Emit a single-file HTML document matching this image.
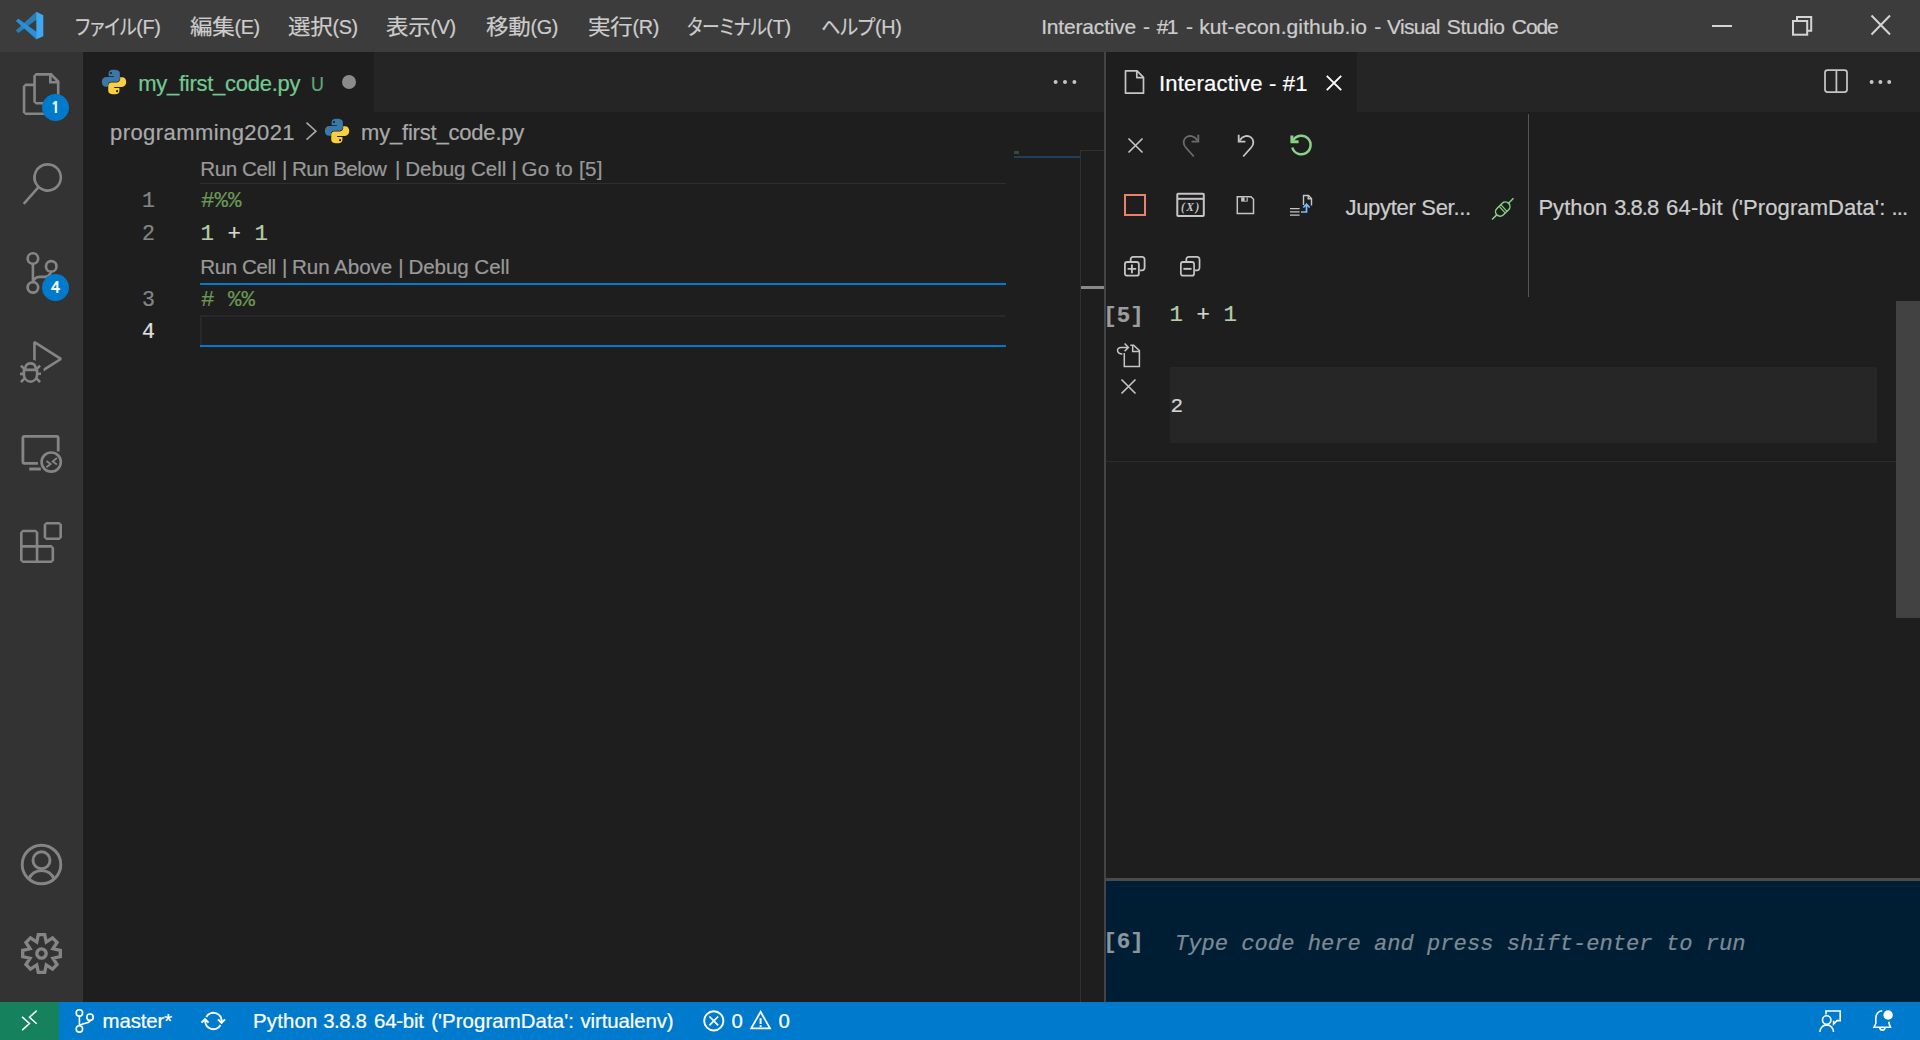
<!DOCTYPE html>
<html lang="ja">
<head>
<meta charset="utf-8">
<title>Interactive - #1 - kut-econ.github.io - Visual Studio Code</title>
<style>
*{box-sizing:border-box;margin:0;padding:0}
html,body{width:1920px;height:1040px;overflow:hidden;background:#1e1e1e}
body{position:relative;font-family:"Liberation Sans","Noto Sans CJK JP",sans-serif;color:#ccc;-webkit-font-smoothing:antialiased}
.abs{position:absolute}
.t{position:absolute;white-space:nowrap;line-height:1;-webkit-text-stroke:0.22px}
.ui{font-family:"Liberation Sans","Noto Sans CJK JP",sans-serif}
.mono{font-family:"Liberation Mono","DejaVu Sans Mono",monospace}
svg{position:absolute;overflow:visible}
/* regions */
#titlebar{left:0;top:0;width:1920px;height:52px;background:#3c3c3c}
#activity{left:0;top:52px;width:83px;height:950px;background:#333333}
#status{left:0;top:1002px;width:1920px;height:38px;background:#007acc}
#remote{left:0;top:1002px;width:59px;height:38px;background:#16825d}
#tabsL{left:83px;top:52px;width:1021px;height:60px;background:#252526}
#tabL{left:83px;top:52px;width:291px;height:60px;background:#1e1e1e}
#tabsR{left:1106px;top:52px;width:814px;height:60px;background:#252526}
#tabR{left:1106px;top:52px;width:251px;height:60px;background:#1e1e1e}
#split{left:1104px;top:52px;width:2px;height:950px;background:#444444}
.k{font-feature-settings:"palt";display:inline-block;transform-origin:0 85%}
.l{font-size:19.8px;letter-spacing:-0.3px}
.j{display:inline-block;transform:scaleY(.93);transform-origin:0 85%}
.menu{top:16px;font-size:22.5px;color:#cccccc;letter-spacing:-0.3px}

.py1{fill:#3a78aa}.py2{fill:#f8cf3f}
.tabtxt{font-size:22px}
.cl{font-size:20.6px;color:#999999;letter-spacing:-0.14px}
.code{font-family:"Liberation Mono","DejaVu Sans Mono",monospace;font-size:22.45px;white-space:pre}
.ln{font-family:"Liberation Mono","DejaVu Sans Mono",monospace;font-size:21.5px;color:#858585}
.cm{color:#6a9955}.nu{color:#b5cea8}.op{color:#d4d4d4}
.sb{top:1011px;font-size:20.400px;color:#ffffff}
.ttl{top:16px;font-size:21px;color:#cccccc}
</style>
</head>
<body>
<!-- ===== title bar ===== -->
<div id="titlebar" class="abs"></div>
<div id="activity" class="abs"></div>
<div id="tabsL" class="abs"></div>
<div id="tabL" class="abs"></div>
<div id="tabsR" class="abs"></div>
<div id="tabR" class="abs"></div>
<div id="split" class="abs"></div>
<div id="status" class="abs"></div>
<div id="remote" class="abs"></div>

<!-- menu -->
<span class="t menu" id="m1" style="left:75px"><span class="k" style="transform:scale(.8,.93);margin-right:-15.6px">ファイル</span><span class="l">(F)</span></span>
<span class="t menu" id="m2" style="left:190px"><span class="j">編集</span><span class="l">(E)</span></span>
<span class="t menu" id="m3" style="left:288px"><span class="j">選択</span><span class="l">(S)</span></span>
<span class="t menu" id="m4" style="left:386px"><span class="j">表示</span><span class="l">(V)</span></span>
<span class="t menu" id="m5" style="left:486px"><span class="j">移動</span><span class="l">(G)</span></span>
<span class="t menu" id="m6" style="left:588px"><span class="j">実行</span><span class="l">(R)</span></span>
<span class="t menu" id="m7" style="left:687px"><span class="k" style="transform:scale(.785,.93);margin-right:-22.1px">ターミナル</span><span class="l">(T)</span></span>
<span class="t menu" id="m8" style="left:821px"><span class="k" style="transform:scale(.85,.93);margin-right:-9.7px">ヘルプ</span><span class="l">(H)</span></span>
<span class="t ttl" id="tA" style="left:1041.20px;letter-spacing:-0.180px">Interactive</span>
<span class="t ttl" id="tB" style="left:1143.00px">-</span>
<span class="t ttl" id="tC" style="left:1156.80px;letter-spacing:-1.700px">#1</span>
<span class="t ttl" id="tD" style="left:1186.00px">-</span>
<span class="t ttl" id="tE" style="left:1199.20px;letter-spacing:0.112px">kut-econ.github.io</span>
<span class="t ttl" id="tF" style="left:1374.20px">-</span>
<span class="t ttl" id="tG" style="left:1387.00px;letter-spacing:-0.680px">Visual</span>
<span class="t ttl" id="tH" style="left:1446.80px;letter-spacing:-0.280px">Studio</span>
<span class="t ttl" id="tI" style="left:1511.80px;letter-spacing:-1.066px">Code</span>


<!-- VS Code logo -->
<svg id="vslogo" style="left:16px;top:12px" width="28" height="28" viewBox="0 0 100 100">
  <path d="M-0.600 65.800L8.400 74.900L74 26.500V0L72.600 -0.600Z" fill="#2c7db6"/>
  <path d="M-0.600 31.800L8.400 24.300L74 71V97L72.600 97.500Z" fill="#2990d9"/>
  <path d="M72.600 -0.600L97.500 11.400V86.200L72.600 97.500Z" fill="#40a8f3"/>
</svg>

<!-- activity bar: files -->
<svg style="left:20.500px;top:73px" width="42" height="42" viewBox="0 0 24 24" fill="#858585">
  <path d="M17.5 0h-9L7 1.5V6H2.5L1 7.500v15.070L2.500 24h12.070L16 22.570V18h4.700l1.300-1.430V4.500L17.500 0zm0 2.120l2.380 2.380H17.500V2.120zm-3 20.380h-12v-15H7v9.070L8.500 18h6v4.500zm6-6h-12v-15H16V6h4.500v10.500z"/>
</svg>
<div class="abs" style="left:42px;top:93.600px;width:27px;height:27px;border-radius:50%;background:#007acc"></div>
<span class="t" id="b1" style="font-family:'NanumGothic',sans-serif;left:42px;top:99.600px;width:27px;text-align:center;font-size:15.5px;font-weight:bold;color:#fff">1</span>
<!-- search -->
<svg style="left:21px;top:162.500px" width="42" height="42" viewBox="0 0 24 24" fill="#858585">
  <path d="M15.250 0a8.250 8.250 0 0 0-6.180 13.720L1 22.880l1.120 1 8.050-9.120A8.251 8.251 0 1 0 15.250.010V0zm0 15a6.750 6.750 0 1 1 0-13.500 6.750 6.750 0 0 1 0 13.500z"/>
</svg>
<!-- source control -->
<svg style="left:21px;top:251.500px" width="42" height="42" viewBox="0 0 24 24" fill="#858585">
  <path d="M21.007 8.222A3.738 3.738 0 0 0 15.045 5.200a3.737 3.737 0 0 0 1.156 6.583 2.988 2.988 0 0 1-2.668 1.670h-2.990a4.456 4.456 0 0 0-2.989 1.165V7.400a3.737 3.737 0 1 0-1.494 0v9.117a3.776 3.776 0 1 0 1.816.099 2.990 2.990 0 0 1 2.668-1.667h2.990a4.484 4.484 0 0 0 4.223-3.039 3.736 3.736 0 0 0 3.250-3.687zM4.565 3.738a2.242 2.242 0 1 1 4.484 0 2.242 2.242 0 0 1-4.484 0zm4.484 16.441a2.242 2.242 0 1 1-4.484 0 2.242 2.242 0 0 1 4.484 0zm8.221-9.715a2.242 2.242 0 1 1 0-4.485 2.242 2.242 0 0 1 0 4.485z"/>
</svg>
<div class="abs" style="left:42px;top:273.600px;width:27px;height:27px;border-radius:50%;background:#007acc"></div>
<span class="t" id="b4" style="font-family:'NanumGothic',sans-serif;left:42px;top:279.600px;width:27px;text-align:center;font-size:15.5px;font-weight:bold;color:#fff">4</span>
<!-- debug -->
<svg style="left:20.300px;top:340.800px" width="42" height="42" viewBox="0 0 24 24" fill="#858585">
  <path d="M10.940 13.500l-1.320 1.320a3.730 3.730 0 0 0-7.240 0L1.060 13.500 0 14.560l1.720 1.720-.22.220V18H0v1.500h1.500v.080c.077.489.214.966.410 1.420L0 22.940 1.060 24l1.650-1.650A4.308 4.308 0 0 0 6 24a4.310 4.310 0 0 0 3.290-1.650L10.940 24 12 22.940 10.090 21c.198-.464.336-.951.410-1.450v-.100H12V18h-1.500v-1.500l-.22-.220L12 14.560l-1.060-1.060zM6 13.500a2.250 2.250 0 0 1 2.250 2.250h-4.500A2.250 2.250 0 0 1 6 13.500zm3 6a3.330 3.330 0 0 1-3 3 3.330 3.330 0 0 1-3-3v-2.250h6v2.250zm14.760-9.900v1.260L13.500 17.370V15.600l8.500-5.370L9 2v9.460a5.070 5.070 0 0 0-1.500-.72V.630L8.640 0l15.120 9.600z"/>
</svg>
<!-- remote explorer -->
<svg style="left:12px;top:425px" width="60" height="55" viewBox="12 425 60 55" fill="none" stroke="#858585" stroke-width="2.800">
  <path d="M37.900 463.300H24.400A1.500 1.500 0 0 1 22.900 461.800V437.900A1.500 1.500 0 0 1 24.400 436.400H56.700A1.500 1.500 0 0 1 58.200 437.900V451.400"/>
  <path d="M29.200 469H40.800" stroke-width="3"/>
  <circle cx="51.200" cy="462.100" r="9.600" stroke-width="2.700"/>
  <path d="M46.400 460.900L50.600 464.100L46.400 467.300M56.900 458L52.700 461.400L56.900 464.600" stroke-width="1.900"/>
</svg>
<!-- extensions -->
<svg style="left:19.700px;top:521.900px" width="42" height="41" viewBox="0 0 24 24" preserveAspectRatio="none" fill="#858585">
  <path d="M13.500 1.500L15 0h7.500L24 1.500V9l-1.500 1.500H15L13.500 9V1.500zm1.500 0V9h7.500V1.500H15zM0 15V6l1.500-1.500H9L10.500 6v7.500H18l1.500 1.500v7.500L18 24H1.500L0 22.500V15zm9-1.500V6H1.500v7.500H9zM9 15H1.500v7.500H9V15zm1.500 7.500H18V15h-7.500v7.500z"/>
</svg>
<!-- account -->
<svg style="left:19.900px;top:843px" width="43" height="43" viewBox="-21.500 -21.500 43 43" fill="none" stroke="#858585" stroke-width="2.900">
  <circle cx="0" cy="0" r="19.300"/>
  <circle cx="0" cy="-4.300" r="8.500"/>
  <path d="M-12.600 14.600A13.500 13.500 0 0 1 12.600 14.600"/>
</svg>
<!-- gear -->
<svg style="left:19.700px;top:931.800px" width="43" height="43" viewBox="-21.500 -21.500 43 43" fill="none" stroke="#858585" stroke-width="3.300">
  <path d="M-3.20 -18.80 L3.20 -18.80 L4.75 -11.46 L11.03 -15.56 L15.56 -11.03 L11.46 -4.75 L18.80 -3.20 L18.80 3.20 L11.46 4.75 L15.56 11.03 L11.03 15.56 L4.75 11.46 L3.20 18.80 L-3.20 18.80 L-4.75 11.46 L-11.03 15.56 L-15.56 11.03 L-11.46 4.75 L-18.80 3.20 L-18.80 -3.20 L-11.46 -4.75 L-15.56 -11.03 L-11.03 -15.56 L-4.75 -11.46Z"/>
  <circle cx="0" cy="0" r="4.650" stroke-width="3.400"/>
</svg>

<!-- window controls -->
<div class="abs" style="left:1712px;top:25px;width:20px;height:2px;background:#d4d4d4"></div>
<svg style="left:1790px;top:14px" width="24" height="24" viewBox="0 0 24 24" fill="none" stroke="#d4d4d4" stroke-width="2">
  <rect x="3" y="7" width="14.200" height="13.700"/>
  <path d="M7 7V3H21.200V16.700H17.200"/>
</svg>
<svg style="left:1871px;top:15px" width="20" height="20" viewBox="0 0 20 20" fill="none" stroke="#d4d4d4" stroke-width="2">
  <path d="M0.500 0.500L19 19.500M19 0.500L0.500 19.500"/>
</svg>



<!-- python icon def -->
<svg width="0" height="0" style="left:0;top:0">
  <defs>
    <g id="pyhalf">
      <path d="M11.900 0.800C8.300 0.800 7.200 2.300 7.200 4.100V6.700H12.100V7.600H4.900C2.600 7.600 0.800 9.300 0.800 12.200C0.800 15.100 2.400 16.700 4.500 16.700H6.500V14.600C6.500 13.100 8.100 11.900 10.100 11.900H14.900C16.500 11.900 17.700 10.600 17.700 9.000V4.100C17.700 2.400 16.300 0.800 11.900 0.800ZM9.400 2.700A1 1 0 1 1 9.400 4.700A1 1 0 1 1 9.400 2.700Z" fill-rule="evenodd"/>
    </g>
    <g id="pyicon">
      <use href="#pyhalf" class="py1"/>
      <use href="#pyhalf" class="py2" transform="rotate(180 12.250 12.250)"/>
    </g>
  </defs>
</svg>
<!-- left tab -->
<svg style="left:100.850px;top:68.750px" width="26.100" height="26.100" viewBox="0 0 24.500 24.500"><use href="#pyicon"/></svg>
<span class="t tabtxt" id="tab1" style="left:138.25px;top:72.750px;color:#73c991;letter-spacing:-0.266px">my_first_code.py</span>
<span class="t" id="tabU" style="left:310.800px;top:73.700px;font-size:20.300px;color:#73c991;opacity:.8;transform:scaleX(.88);transform-origin:0 0">U</span>
<div class="abs" style="left:342px;top:75px;width:14px;height:14px;border-radius:50%;background:#8b8b8b"></div>
<!-- left tab actions: ellipsis -->
<svg style="left:1053px;top:79px" width="24" height="6" viewBox="0 0 24 6" fill="#c5c5c5"><circle cx="2.600" cy="3" r="2"/><circle cx="12" cy="3" r="2"/><circle cx="21.400" cy="3" r="2"/></svg>
<!-- breadcrumbs -->
<span class="t tabtxt" id="bc1" style="left:110.00px;top:121.750px;color:#a9a9a9;letter-spacing:0.428px">programming2021</span>
<svg style="left:304.500px;top:122px" width="12" height="18" viewBox="0 0 12 18" fill="none" stroke="#a9a9a9" stroke-width="1.600"><path d="M1.500 0.700L10.900 9.150L1.500 17.600"/></svg>
<svg style="left:323.750px;top:117.800px" width="26.100" height="26.100" viewBox="0 0 24.500 24.500"><use href="#pyicon"/></svg>
<span class="t tabtxt" id="bc2" style="left:361.00px;top:121.750px;color:#a9a9a9;letter-spacing:-0.197px">my_first_code.py</span>

<!-- editor lines -->
<span class="t cl" id="cl1a" style="left:200.30px;top:159px;letter-spacing:-0.440px">Run Cell</span>
<span class="t cl" id="cl1b" style="left:282.00px;top:159px">|</span>
<span class="t cl" id="cl1c" style="left:292.00px;top:159px;letter-spacing:-0.578px">Run Below</span>
<span class="t cl" id="cl1d" style="left:395.00px;top:159px">|</span>
<span class="t cl" id="cl1e" style="left:405.30px;top:159px;letter-spacing:-0.107px">Debug Cell</span>
<span class="t cl" id="cl1f" style="left:511.60px;top:159px">|</span>
<span class="t cl" id="cl1g" style="left:521.50px;top:159px;letter-spacing:0.235px">Go to [5]</span>
<div class="abs" style="left:200px;top:183px;width:806px;height:1px;background:#2f2f2f"></div>
<span class="t ln" id="ln1" style="left:142px;top:191px">1</span>
<span class="t code cm" id="c1" style="left:201px;top:190px">#%%</span>
<span class="t ln" id="ln2" style="left:142px;top:224px">2</span>
<span class="t code" id="c2" style="left:200.5px;top:223px"><span class="nu">1</span><span class="op"> + </span><span class="nu">1</span></span>
<span class="t cl" id="cl2a" style="left:200.30px;top:257px;letter-spacing:-0.440px">Run Cell</span>
<span class="t cl" id="cl2b" style="left:282.00px;top:257px">|</span>
<span class="t cl" id="cl2c" style="left:292.00px;top:257px;letter-spacing:-0.065px">Run Above</span>
<span class="t cl" id="cl2d" style="left:398.20px;top:257px">|</span>
<span class="t cl" id="cl2e" style="left:408.40px;top:257px;letter-spacing:-0.074px">Debug Cell</span>
<div class="abs" style="left:200px;top:282.500px;width:806px;height:2px;background:#007acc"></div>
<span class="t ln" id="ln3" style="left:142px;top:290px">3</span>
<span class="t code cm" id="c3" style="left:201px;top:289px"># %%</span>
<div class="abs" style="left:200px;top:314.500px;width:806px;height:33px;border:2px solid #282828;border-right:none;border-bottom:none"></div>
<div class="abs" style="left:200px;top:345.250px;width:806px;height:1.750px;background:#007acc"></div>
<span class="t ln" id="ln4" style="left:142px;top:322px;color:#e0e0e0">4</span>

<!-- minimap + overview ruler -->
<div class="abs" style="left:1014px;top:151px;width:5px;height:3px;background:#3c5a34;opacity:.8"></div>
<div class="abs" style="left:1014px;top:156px;width:66px;height:1.500px;background:#1f3f5a"></div>
<div class="abs" style="left:1080px;top:150px;width:24px;height:852px;border-left:1px solid #303031;border-top:1px solid #303031"></div>
<div class="abs" style="left:1081px;top:286px;width:23px;height:3px;background:#8a8a8a"></div>



<!-- right tab -->
<svg style="left:1124px;top:69px" width="21" height="26" viewBox="0 0 21 26" fill="none" stroke="#c5c5c5" stroke-width="1.700" stroke-linejoin="round"><path d="M1.500 1.800H13L19.500 8.300V24.200H1.500Z"/><path d="M12.800 1.800V8.600H19.500"/></svg>
<span class="t tabtxt" id="tab2" style="left:1159.00px;top:72.500px;color:#ffffff;letter-spacing:0.200px">Interactive - #1</span>
<svg style="left:1326px;top:74.500px" width="16" height="16" viewBox="0 0 16 16" fill="none" stroke="#ffffff" stroke-width="1.900"><path d="M0.800 0.800L15.200 15.200M15.200 0.800L0.800 15.200"/></svg>
<!-- split + more -->
<svg style="left:1824px;top:68.700px" width="24" height="24" viewBox="0 0 24 24" fill="none" stroke="#c5c5c5" stroke-width="1.750"><rect x="1" y="1" width="22" height="22" rx="2.500"/><path d="M12.400 1V23"/></svg>
<svg style="left:1869px;top:79px" width="24" height="6" viewBox="0 0 24 6" fill="#c5c5c5"><circle cx="2.600" cy="3" r="2"/><circle cx="11.400" cy="3" r="2"/><circle cx="20.200" cy="3" r="2"/></svg>

<!-- toolbar row 1 -->
<svg style="left:1127.500px;top:137.500px" width="15" height="15" viewBox="0 0 15 15" fill="none" stroke="#c5c5c5" stroke-width="1.600"><path d="M0.500 0.500L14.500 14.500M14.500 0.500L0.500 14.500"/></svg>
<!-- redo (disabled) -->
<svg style="left:1182px;top:134px" width="18" height="24" viewBox="0 0 18 24" fill="none" stroke="#6b6b6b" stroke-width="1.850"><path d="M11.800 22.500L3.800 13.500C0.800 10.200 1 5.800 4 3.400C7.200 0.900 12 1.600 15.500 6.500"/><path d="M16.300 0.800V7.600H9.600"/></svg>
<!-- undo -->
<svg style="left:1237px;top:134px" width="18" height="24" viewBox="0 0 18 24" fill="none" stroke="#c5c5c5" stroke-width="1.850"><path d="M6.200 22.500L14.200 13.500C17.200 10.200 17 5.800 14 3.400C10.800 0.900 6 1.600 2.500 6.500"/><path d="M1.700 0.800V7.600H8.400"/></svg>
<!-- restart (green) -->
<svg style="left:1289px;top:133px" width="24" height="24" viewBox="0 0 24 24" fill="none" stroke="#89d185" stroke-width="2.500"><path d="M4.300 7.200A9.300 9.300 0 1 1 3.300 14.500"/><path d="M2.900 2.400V8.800H9.600" stroke-width="3"/></svg>
<!-- toolbar row 2 -->
<div class="abs" style="left:1124px;top:194px;width:22px;height:22px;border:2.500px solid #ea816c"></div>
<svg style="left:1176px;top:192px" width="30" height="26" viewBox="0 0 30 26" fill="none" stroke="#c5c5c5" stroke-width="2"><rect x="1.300" y="1.800" width="26.500" height="22.300" rx="0.800"/><path d="M1.300 6.800H27.800"/></svg>
<span class="t" id="vx" style="left:1181px;top:202px;font-family:'Liberation Serif',serif;font-style:italic;font-weight:bold;font-size:11.500px;color:#c5c5c5;letter-spacing:1.500px;-webkit-text-stroke:0">(X)</span>
<svg style="left:1236px;top:195px" width="19" height="20" viewBox="0 0 19 20" fill="none" stroke="#c5c5c5" stroke-width="1.500"><path d="M1.300 1.800H15L17.500 4.300V18.500H1.300Z"/><rect x="5.200" y="2.400" width="6.500" height="4.200" fill="#c5c5c5" stroke="none"/><rect x="8.600" y="2.400" width="2" height="3.400" fill="#1e1e1e" stroke="none"/></svg>
<svg style="left:1290px;top:194px" width="23" height="23" viewBox="0 0 23 23" fill="none" stroke="#c5c5c5" stroke-width="1.400"><path d="M13.500 11V1.500H18.500L21.500 4.500V11.500"/><path d="M18.200 1.700V4.800H21.300"/><path d="M0 14.600H9.600M0 17.900H9.600M0 21.200H9.600" stroke-width="1.200"/><path d="M11 18H16.500V10M13.300 13.500L16.500 10.200L19.700 13.500" stroke="#75beff" stroke-width="1.700"/></svg>
<span class="t tabtxt" id="jup" style="left:1345.50px;top:197px;color:#cccccc;letter-spacing:-0.307px">Jupyter Ser...</span>
<!-- plug -->
<svg style="left:1491px;top:197px" width="24" height="24" viewBox="0 0 24 24" fill="none" stroke="#89d185" stroke-width="1.500"><path d="M1 22.500L6 17.600M17.500 6.200L22.500 1.200"/><rect x="3.500" y="7.600" width="16.500" height="9" rx="4.500" transform="rotate(-44 11.750 12.100)"/><path d="M8 9.200L14.400 16.200M9.800 7.600L16.200 14.600" stroke-width="1.200"/></svg>
<div class="abs" style="left:1528px;top:114px;width:1px;height:183px;background:#555555"></div>
<span class="t tabtxt" id="kA" style="left:1538.40px;top:197px;color:#cccccc;letter-spacing:0.060px">Python</span>
<span class="t tabtxt" id="kB" style="left:1614.20px;top:197px;color:#cccccc;letter-spacing:-0.975px">3.8.8</span>
<span class="t tabtxt" id="kC" style="left:1666.00px;top:197px;color:#cccccc;letter-spacing:0.300px">64-bit</span>
<span class="t tabtxt" id="kD" style="left:1731.40px;top:197px;color:#cccccc;letter-spacing:0.086px">('ProgramData':</span>
<span class="t tabtxt" id="kE" style="left:1891.40px;top:197px;color:#cccccc;letter-spacing:-0.800px">...</span>
<!-- toolbar row 3: expand / collapse all -->
<svg style="left:1124.300px;top:256.200px" width="21.500" height="20.600" viewBox="0 0 21.500 20.600" fill="none" stroke="#c5c5c5" stroke-width="1.800"><rect x="0.900" y="6" width="13.950" height="13.700" rx="2.300"/><path d="M6.650 5.100V3.400A2.500 2.500 0 0 1 9.150 0.900H18.100A2.500 2.500 0 0 1 20.600 3.400V11.800A2.500 2.500 0 0 1 18.100 14.300H15.800"/><path d="M3.600 12.850H12.200M7.900 8.550V17.150" stroke-width="1.900"/></svg>
<svg style="left:1180.400px;top:256.200px" width="20.400" height="20.600" viewBox="0 0 21.500 20.600" preserveAspectRatio="none" fill="none" stroke="#c5c5c5" stroke-width="1.800"><rect x="0.900" y="6" width="13.950" height="13.700" rx="2.300"/><path d="M6.650 5.100V3.400A2.500 2.500 0 0 1 9.150 0.900H18.100A2.500 2.500 0 0 1 20.600 3.400V11.800A2.500 2.500 0 0 1 18.100 14.300H15.800"/><path d="M3.600 12.850H12.200" stroke-width="1.900"/></svg>

<!-- cell -->
<span class="t code" id="ec5" style="left:1103.300px;top:304.500px;font-weight:bold;color:#9d9d9d">[5]</span>
<span class="t code" id="pc" style="left:1169.500px;top:304px"><span class="nu">1</span><span class="op"> + </span><span class="nu">1</span></span>
<svg style="left:1108px;top:336px" width="44" height="40" viewBox="1108 336 44 40" fill="none" stroke="#c5c5c5" stroke-width="1.500"><path d="M1124.300 353V366.500H1139.400V350.600L1133.600 345.200H1130.300"/><path d="M1132.700 345.400V351.500H1139.300"/><path d="M1122.400 353.900C1116.500 353.900 1115.800 347.400 1121.200 347.400H1128"/><path d="M1124.600 343.500L1128.400 347.400L1124.600 351.200"/></svg>
<svg style="left:1120.800px;top:378.800px" width="15" height="15" viewBox="0 0 15 15" fill="none" stroke="#c5c5c5" stroke-width="1.600"><path d="M0.500 0.500L14.500 14.500M14.500 0.500L0.500 14.500"/></svg>
<div class="abs" style="left:1170px;top:367px;width:707px;height:76px;background:#262626"></div>
<span class="t code" id="out2" style="left:1170.500px;top:396px;color:#d4d4d4;font-size:21px">2</span>
<div class="abs" style="left:1106px;top:460.500px;width:790px;height:1px;background:#2b2b2b"></div>
<div class="abs" style="left:1896px;top:301px;width:24px;height:317px;background:#424242"></div>

<!-- input -->
<div class="abs" style="left:1106px;top:878px;width:814px;height:124px;background:#001e33;border-top:3px solid #4b4b4b"></div>
<span class="t code" id="ec6" style="left:1103.300px;top:931px;font-weight:bold;color:#8c969e">[6]</span>
<span class="t code" id="ph" style="left:1175px;top:933.500px;font-style:italic;color:#7d8a95;font-size:22.120px">Type code here and press shift-enter to run</span>



<!-- status bar icons (absolute px coordinates, y offset 1002) -->
<svg style="left:0;top:1002px" width="1920" height="38" viewBox="0 1002 1920 38" fill="none" stroke="#ffffff" stroke-width="1.600">
  <!-- remote -->
  <path d="M22.100 1016.900L29.500 1023.500L22.100 1030.100M36.700 1010.600L29.500 1017.200L36.700 1023.800" stroke-width="1.500"/>
  <!-- branch -->
  <circle cx="79.400" cy="1012.900" r="3.200"/><circle cx="79.400" cy="1028.900" r="3.200"/><circle cx="90" cy="1017.200" r="3.200"/>
  <path d="M79.400 1016.100V1025.700M90 1020.400C90 1023.800 84.500 1022 80.200 1025.200"/>
  <!-- sync -->
  <g stroke-width="2">
  <path d="M206.300 1016.900A8.200 8.200 0 0 1 221.600 1021.600"/>
  <path d="M218 1019.400L221.500 1022.900L225 1019.400"/>
  <path d="M220.500 1025.100A8.200 8.200 0 0 1 205.200 1020.400"/>
  <path d="M201.500 1022.600L205 1019.100L208.500 1022.600"/>
  </g>
  <!-- error -->
  <circle cx="713.800" cy="1020.900" r="9.600" stroke-width="1.900"/>
  <path d="M709.400 1016.500L718.200 1025.300M718.200 1016.500L709.400 1025.300" stroke-width="1.700"/>
  <!-- warning -->
  <path d="M760.600 1011.800L770 1028.400H751.200Z" stroke-width="1.800"/>
  <path d="M760.600 1018.200V1024M760.600 1025.200V1027" stroke-width="2"/>
  <!-- feedback -->
  <circle cx="1826.700" cy="1020" r="4.200"/>
  <path d="M1819.900 1032A6.800 7.200 0 0 1 1833.500 1032"/>
  <path d="M1826 1014.500V1011H1840.200V1020.600H1837L1833.600 1024V1020.800"/>
  <!-- bell -->
  <path d="M1882.300 1010.700C1877.500 1011.200 1875.800 1015 1875.800 1019V1023.500L1874 1027.200H1890.500L1889 1023.500V1021.800"/>
  <path d="M1879.800 1027.500A2.600 2.600 0 0 0 1885 1027.500"/>
  <circle cx="1888.100" cy="1015" r="4.700" fill="#ffffff" stroke="none"/>
</svg>
<span class="t sb" id="s1" style="left:102.50px;letter-spacing:-0.083px">master*</span>
<span class="t sb" id="s2a" style="left:253.05px;letter-spacing:0.170px">Python</span>
<span class="t sb" id="s2b" style="left:323.20px;letter-spacing:-0.450px">3.8.8</span>
<span class="t sb" id="s2c" style="left:374.00px;letter-spacing:-0.200px">64-bit</span>
<span class="t sb" id="s2d" style="left:431.20px;letter-spacing:0.079px">('ProgramData':</span>
<span class="t sb" id="s2e" style="left:580.40px;letter-spacing:-0.090px">virtualenv)</span>
<span class="t sb" id="s3" style="left:731.500px">0</span>
<span class="t sb" id="s4" style="left:778.500px">0</span>
</body>
</html>
